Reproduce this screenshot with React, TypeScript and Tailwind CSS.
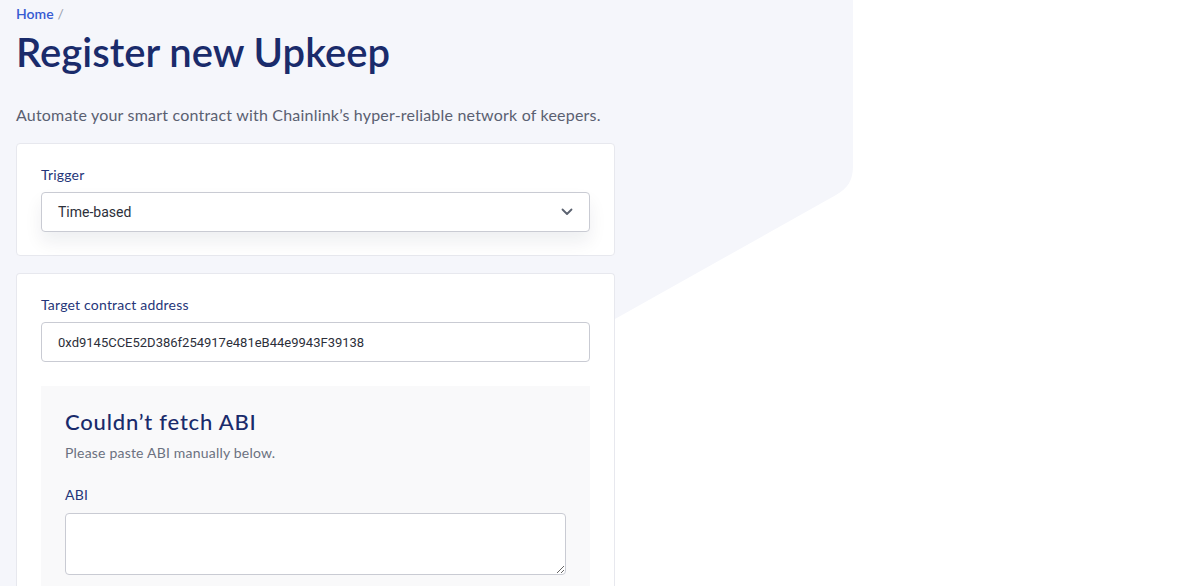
import React from "react";

const navy = "text-[#1a2b6b]";

const Background = () => (
  <svg
    className="absolute left-0 top-0 -z-0"
    width="853"
    height="664"
    viewBox="0 0 853 664"
  >
    <path
      d="M0 0 H853 V166 C853 180 848 188 836 195 L0 664 Z"
      fill="#f5f6fb"
    />
  </svg>
);

const Chevron = () => (
  <svg width="12" height="8" viewBox="0 0 12 8" fill="none">
    <path
      d="M1.5 1.5 L6 6 L10.5 1.5"
      stroke="#5b6270"
      strokeWidth="1.8"
      strokeLinecap="round"
      strokeLinejoin="round"
    />
  </svg>
);

const App = () => {
  return (
    <div
      className="relative min-h-[586px] w-full overflow-hidden bg-white"
      style={{ fontFamily: "Lato, 'Noto Sans', sans-serif" }}
    >
      <Background />
      <div className="relative pl-4">
        <div className="pt-1 text-sm leading-5">
          <span className="font-semibold text-[#375bd2]">Home</span>
          <span className="ml-1 text-[#9aa0ad]">/</span>
        </div>
        <h1 className={`mt-1 text-[40px] font-semibold leading-[48px] ${navy}`}>
          Register new Upkeep
        </h1>
        <p className="mt-[27px] text-base leading-6 tracking-[0.2px] text-[#5a6071]">
          Automate your smart contract with Chainlink’s hyper-reliable network of
          keepers.
        </p>

        {/* trigger */}
        <div className="mt-4 w-[599px] rounded border border-[#e7e8ee] bg-white px-6 pb-[23px] pt-[21px]">
          <label className="block text-sm leading-5 tracking-[0.2px] text-[#263679]">
            Trigger
          </label>
          <div className="mt-[7px] flex h-10 items-center justify-between rounded border border-[#c9cbd3] bg-white pl-4 pr-4 shadow-[0_10px_18px_rgba(20,30,60,0.07)]">
            <span
              className="text-sm text-[#2c2f3a]"
              style={{ fontFamily: "Roboto, 'Liberation Sans', sans-serif" }}
            >
              Time-based
            </span>
            <Chevron />
          </div>
        </div>

        {/* target contract */}
        <div className="mt-[17px] w-[599px] rounded-t border border-b-0 border-[#e7e8ee] bg-white px-6 pt-[21px]">
          <label className="block text-sm leading-5 tracking-[0.2px] text-[#263679]">
            Target contract address
          </label>
          <input
            readOnly
            value="0xd9145CCE52D386f254917e481eB44e9943F39138"
            className="mt-[7px] block h-10 w-full rounded border border-[#c9cbd3] bg-white px-4 text-[13px] text-[#2c2f3a] outline-none"
            style={{ fontFamily: "Roboto, 'Liberation Sans', sans-serif" }}
          />

          <div className="mt-6 bg-[#f9f9fa] px-6 pb-6 pt-[22px]">
            <h2
              className={`text-[22px] font-medium leading-7 tracking-[0.8px] ${navy}`}
            >
              Couldn’t fetch ABI
            </h2>
            <p className="mt-[7px] text-sm leading-5 tracking-[0.2px] text-[#6b7180]">
              Please paste ABI manually below.
            </p>
            <label className="mt-[22px] block text-sm leading-5 tracking-[0.2px] text-[#263679]">
              ABI
            </label>
            <textarea className="mt-2 block h-[62px] w-full rounded border border-[#c9cbd3] bg-white px-3 py-2 text-sm outline-none" />
          </div>
        </div>
      </div>
    </div>
  );
};

export default App;
